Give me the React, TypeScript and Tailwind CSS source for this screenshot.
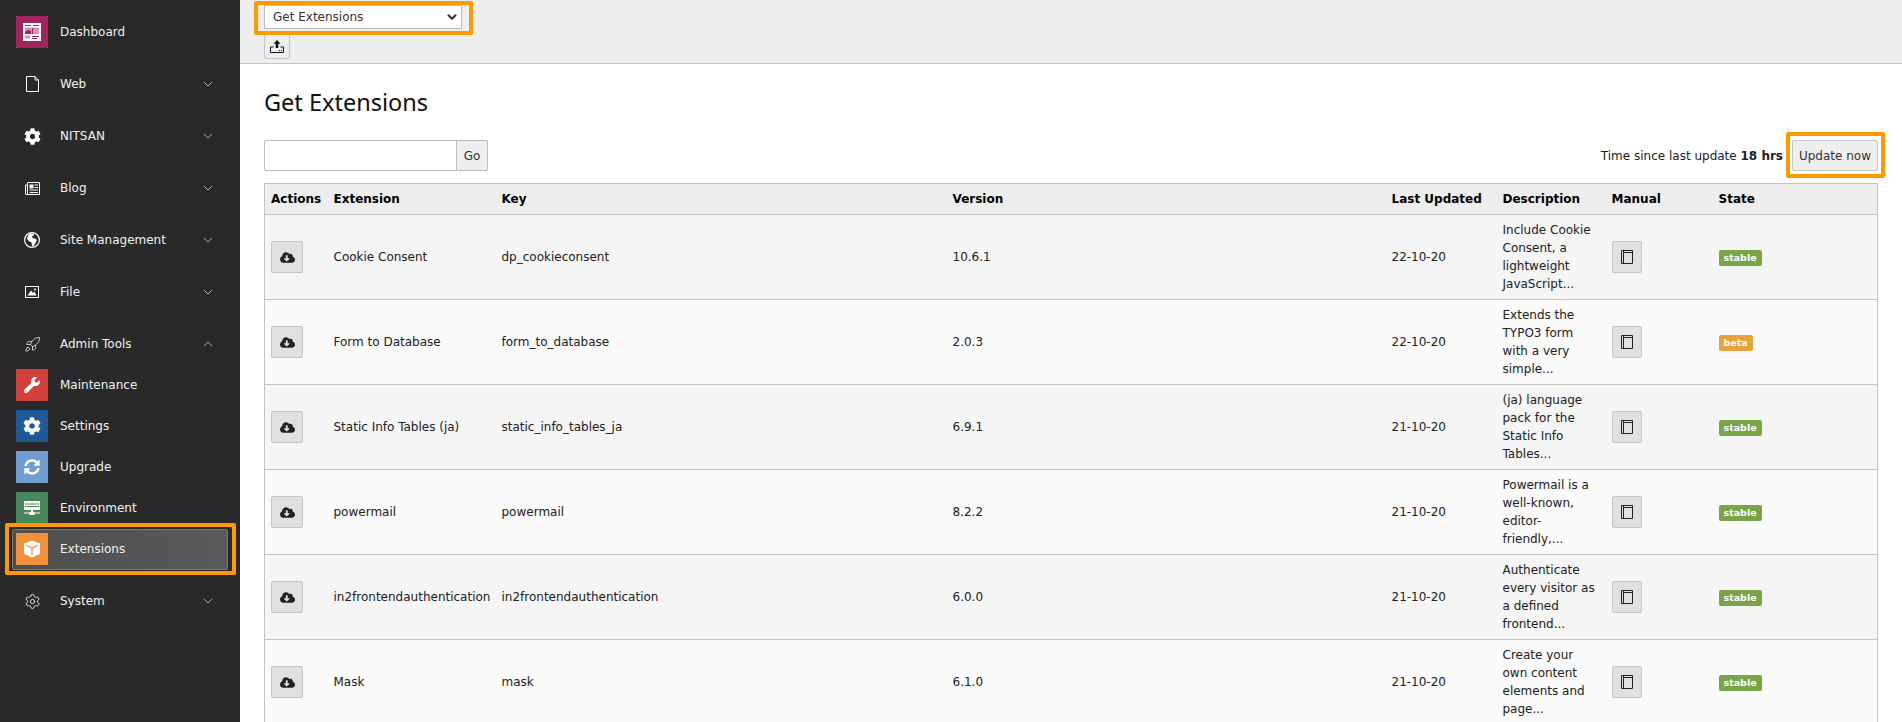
import { ChevronDown, ChevronUp, Rocket, Settings } from "lucide-react";
import { FaCog, FaCloudDownloadAlt, FaSyncAlt, FaWrench } from "react-icons/fa";
import type { ReactNode } from "react";

const DashboardIcon = () => (
  <svg viewBox="0 0 18 18" className="h-[18px] w-[18px]">
    <path fill="#fff" d="M0 0h18v18H0z" />
    <path fill="#a3245f" d="M2 2h6v1H2zM10 2h6v1h-6z" />
    <path fill="#d98fb3" d="M2 4.5h14v6.500H2z" />
    <path fill="#a3245f" d="M9 5h1v6H9zM2 9l3-2 3 1v3H2z" />
    <path fill="#d98fb3" d="M2 12.500h5v3H2z" />
    <path fill="#a3245f" d="M9 13h7v1H9zM9 15h5v1H9z" />
  </svg>
);

const DocIcon = () => (
  <svg viewBox="0 0 13 16" className="h-[16px] w-[13px]" fill="none" stroke="#fff" strokeWidth="1">
    <path d="M.5.5h8.500l3.500 3.500v11.500H.5z" />
    <path d="M9 .5V4h3.500" />
  </svg>
);

const NewsIcon = () => (
  <svg viewBox="0 0 15 13" className="h-[13px] w-[15px]" fill="none" stroke="#fff" strokeWidth="1">
    <path d="M2.500.5h12v12H1a.5.5 0 0 1-.5-.5V3h2" />
    <path d="M2.500 1v11" />
    <path fill="#fff" stroke="none" d="M4.500 2.500h4v4h-4zM9.500 2.500h3.500v1H9.500zM9.500 5h3.500v1H9.500zM4.500 7.500H13v1H4.500zM4.500 10H13v1H4.500z" />
  </svg>
);

const GlobeIcon = () => (
  <svg viewBox="0 0 16 16" className="h-4 w-4">
    <circle cx="8" cy="8" r="7.400" fill="none" stroke="#fff" strokeWidth="1.200" />
    <path fill="#fff" d="M6 1.500 9.500 1.400 10 3 8 4.500 8.500 6 11 6.500 13 8 11.500 11 9.500 14.500 8 14 7.500 10.500 4.500 9 3 6.500 4 3.500z" />
  </svg>
);

const ImageIcon = () => (
  <svg viewBox="0 0 14 12" className="h-[12px] w-[14px]">
    <path fill="#fff" d="M0 0h14v12H0z" />
    <path fill="#292929" d="M1 1h12v10H1z" />
    <path fill="#fff" d="M2.500 9.500 6 4.500l2 2.500 1.500-1.500 2 4z" />
    <circle cx="10" cy="3.500" r="1" fill="#fff" />
  </svg>
);

const EnvironmentIcon = () => (
  <svg viewBox="0 0 16 16" className="h-4 w-4" fill="#fff">
    <path d="M0 1h16v9H0z" />
    <path fill="#47895a" d="M1 3.500h14v1H1zM1 6h14v1H1z" />
    <path d="M7 10h2v3H7zM0 12.500h16v1H0zM5.500 12h5v3h-5z" />
  </svg>
);

const CubeIcon = () => (
  <svg viewBox="0 0 18 18" className="h-[18px] w-[18px]">
    <path fill="#fff" d="M9 .5 17 3.500v10.500l-8 3.500L1 14V3.500z" />
    <path fill="none" stroke="#f0913a" strokeWidth="1.200" d="M3.500 5 9 8.500 14.500 5M9 8.500V15" />
  </svg>
);

const BookIcon = () => (
  <svg viewBox="0 0 12 14" className="h-[14px] w-[12px]" fill="none" stroke="#222" strokeWidth="1">
    <path d="M.5.5h11v13H.5zM2.500.5v13M2.500 2.500h9" />
  </svg>
);

const UploadIcon = () => (
  <svg viewBox="0 0 14 14" className="h-[14px] w-[14px]" fill="none" stroke="#111" strokeWidth="1">
    <path fill="#111" stroke="none" d="M7 0l3.500 3.800H8.300V8H5.700V3.800H3.500z" />
    <path d="M3.500 7H.5v5.500h13V7h-3" />
    <path d="M9 10.500h1M11 10.500h1" />
  </svg>
);

type NavItem = { label: string; icon: ReactNode; open?: boolean };

const modules: NavItem[] = [
  { label: "Web", icon: <DocIcon /> },
  { label: "NITSAN", icon: <FaCog className="h-[17px] w-[17px] text-white" /> },
  { label: "Blog", icon: <NewsIcon /> },
  { label: "Site Management", icon: <GlobeIcon /> },
  { label: "File", icon: <ImageIcon /> },
];

const adminTools = [
  { label: "Maintenance", bg: "bg-[#d1403a]", icon: <FaWrench className="h-[16px] w-[16px] text-white" /> },
  { label: "Settings", bg: "bg-[#1d5a96]", icon: <FaCog className="h-[18px] w-[18px] text-white" /> },
  { label: "Upgrade", bg: "bg-[#6e9fd0]", icon: <FaSyncAlt className="h-4 w-4 text-white" /> },
  { label: "Environment", bg: "bg-[#47895a]", icon: <EnvironmentIcon /> },
];

const rows = [
  { name: "Cookie Consent", key_: "dp_cookieconsent", version: "10.6.1", date: "22-10-20", desc: "Include Cookie Consent, a lightweight JavaScript...", state: "stable" },
  { name: "Form to Database", key_: "form_to_database", version: "2.0.3", date: "22-10-20", desc: "Extends the TYPO3 form with a very simple...", state: "beta" },
  { name: "Static Info Tables (ja)", key_: "static_info_tables_ja", version: "6.9.1", date: "21-10-20", desc: "(ja) language pack for the Static Info Tables...", state: "stable" },
  { name: "powermail", key_: "powermail", version: "8.2.2", date: "21-10-20", desc: "Powermail is a well-known, editor-friendly,...", state: "stable" },
  { name: "in2frontendauthentication", key_: "in2frontendauthentication", version: "6.0.0", date: "21-10-20", desc: "Authenticate every visitor as a defined frontend...", state: "stable" },
  { name: "Mask", key_: "mask", version: "6.1.0", date: "21-10-20", desc: "Create your own content elements and page...", state: "stable" },
];

const Highlight = ({ className }: { className: string }) => (
  <div className={`pointer-events-none absolute rounded-[2px] border-4 border-[#ff9900] ${className}`} />
);

const ModuleRow = ({ item, open }: { item: NavItem; open?: boolean }) => (
  <div className="flex h-[52px] items-center pl-4 pr-[24px] text-[#f1f1f1]">
    <span className="flex w-8 justify-center">{item.icon}</span>
    <span className="ml-3 flex-1">{item.label}</span>
    {open ? (
      <ChevronUp className="h-4 w-4 text-[#a8a8a8]" strokeWidth={1.5} />
    ) : (
      <ChevronDown className="h-4 w-4 text-[#a8a8a8]" strokeWidth={1.5} />
    )}
  </div>
);

const Sidebar = () => (
  <aside className="relative w-[240px] shrink-0 bg-[#292929] pt-[6px] text-[12px]">
    <div className="flex h-[52px] items-center pl-4 text-[#f1f1f1]">
      <span className="flex h-8 w-8 items-center justify-center bg-[#a3245f]">
        <DashboardIcon />
      </span>
      <span className="ml-3">Dashboard</span>
    </div>
    {modules.map((m) => (
      <ModuleRow key={m.label} item={m} />
    ))}
    <ModuleRow item={{ label: "Admin Tools", icon: <Rocket className="h-[17px] w-[17px] text-white" strokeWidth={1} /> }} open />
    <div className="mt-[-5px] mb-[5px]">
      {adminTools.map((t) => (
        <div key={t.label} className="flex h-[41px] items-center pb-px pl-4 text-[#f1f1f1]">
          <span className={`flex h-8 w-8 items-center justify-center rounded-[1px] ${t.bg}`}>{t.icon}</span>
          <span className="ml-3">{t.label}</span>
        </div>
      ))}
      <div className="relative h-[41px]">
        <div className="absolute inset-x-[12px] inset-y-0 rounded-[2px] border border-[#787878] bg-gradient-to-r from-[#4e4e4e] to-[#5a5a5a]" />
        <div className="relative flex h-full items-center pb-px pl-4 text-[#f1f1f1]">
          <span className="flex h-8 w-8 items-center justify-center rounded-[1px] bg-[#f0913a]">
            <CubeIcon />
          </span>
          <span className="ml-3">Extensions</span>
        </div>
      </div>
    </div>
    <ModuleRow item={{ label: "System", icon: <Settings className="h-[17px] w-[17px] text-white" strokeWidth={1.2} /> }} />
    <Highlight className="left-[5px] top-[523px] h-[52px] w-[231px]" />
  </aside>
);

const DocHeader = () => (
  <header className="relative h-[64px] shrink-0 border-b border-[#c3c3c3] bg-[#eeeeee] pl-6 pt-[5px]">
    <div className="flex h-[24px] w-[198px] items-center justify-between border border-[#bbbbbb] bg-white pl-[8px] pr-[2px] text-[12px] text-[#333]">
      <span>Get Extensions</span>
      <ChevronDown className="h-[14px] w-[14px] text-[#333]" strokeWidth={3.5} />
    </div>
    <button className="mt-[5px] flex h-[25px] w-[26px] items-center justify-center rounded-[2px] border border-[#c6c6c6] bg-[#eeeeee]">
      <UploadIcon />
    </button>
    <Highlight className="left-[14px] top-[1px] h-[34px] w-[219px]" />
  </header>
);

const Toolbar = () => (
  <div className="relative mt-[20px] flex h-[31px] items-center justify-between">
    <div className="flex h-[31px]">
      <input className="h-full w-[193px] rounded-l-[2px] border border-[#bbbbbb] bg-white" />
      <button className="h-full w-[31px] rounded-r-[2px] border border-l-0 border-[#bbbbbb] bg-[#eeeeee] text-[12px] text-[#333]">
        Go
      </button>
    </div>
    <div className="flex items-center text-[12px] text-[#212121]">
      <span>
        Time since last update <b>18 hrs</b>
      </span>
      <button className="ml-[9px] h-[31px] w-[86px] rounded-[2px] border border-[#c6c6c6] bg-[#eeeeee] text-[12px] text-[#333]">
        Update now
      </button>
    </div>
    <Highlight className="right-[-7px] top-[-8px] h-[46px] w-[99px]" />
  </div>
);

const StateBadge = ({ state }: { state: string }) => (
  <span
    className={`inline-block h-4 rounded-[2px] px-[5px] text-[9.500px] font-bold leading-4 text-white ${
      state === "beta" ? "bg-[#e8a33d]" : "bg-[#79a548]"
    }`}
  >
    {state}
  </span>
);

const ExtensionsTable = () => (
  <table className="mt-[12px] w-full table-fixed border-collapse border border-[#c3c3c3] text-[12px] text-[#212121]">
    <colgroup>
      <col className="w-[62px]" />
      <col className="w-[168px]" />
      <col className="w-[451px]" />
      <col className="w-[439px]" />
      <col className="w-[111px]" />
      <col className="w-[109px]" />
      <col className="w-[107px]" />
      <col />
    </colgroup>
    <thead>
      <tr className="h-[31px] border-b border-[#c3c3c3] bg-[#ededed] text-left text-black">
        {["Actions", "Extension", "Key", "Version", "Last Updated", "Description", "Manual", "State"].map((h) => (
          <th key={h} className="px-[7px] font-bold first:pl-[6px] first:pr-0">
            {h}
          </th>
        ))}
      </tr>
    </thead>
    <tbody>
      {rows.map((r, i) => (
        <tr key={r.key_} className={`h-[85px] border-b border-[#c3c3c3] ${i % 2 === 0 ? "bg-[#f5f5f5]" : "bg-[#fafafa]"}`}>
          <td className="pl-[6px]">
            <button className="flex h-8 w-8 items-center justify-center rounded-[2px] border border-[#c6c6c6] bg-[#e0e0e0]">
              <FaCloudDownloadAlt className="h-[15px] w-[15px] text-[#222]" />
            </button>
          </td>
          <td className="whitespace-nowrap px-[7px]">{r.name}</td>
          <td className="px-[7px]">{r.key_}</td>
          <td className="px-[7px]">{r.version}</td>
          <td className="px-[7px]">{r.date}</td>
          <td className="px-[7px] leading-[18px]">{r.desc}</td>
          <td className="px-[7px]">
            <button className="flex h-8 w-[30px] items-center justify-center rounded-[2px] border border-[#c6c6c6] bg-[#e0e0e0]">
              <BookIcon />
            </button>
          </td>
          <td className="px-[7px]">
            <StateBadge state={r.state} />
          </td>
        </tr>
      ))}
    </tbody>
  </table>
);

export default function App() {
  return (
    <div className="flex h-[722px] w-[1902px] overflow-hidden bg-white font-['DejaVu_Sans',sans-serif]">
      <Sidebar />
      <main className="flex min-w-0 flex-1 flex-col">
        <DocHeader />
        <div className="px-6 pt-[20px]">
          <h1 className="font-['Noto_Sans',sans-serif] text-[23.500px] leading-[36px] text-[#111]">Get Extensions</h1>
          <Toolbar />
          <ExtensionsTable />
        </div>
      </main>
    </div>
  );
}
